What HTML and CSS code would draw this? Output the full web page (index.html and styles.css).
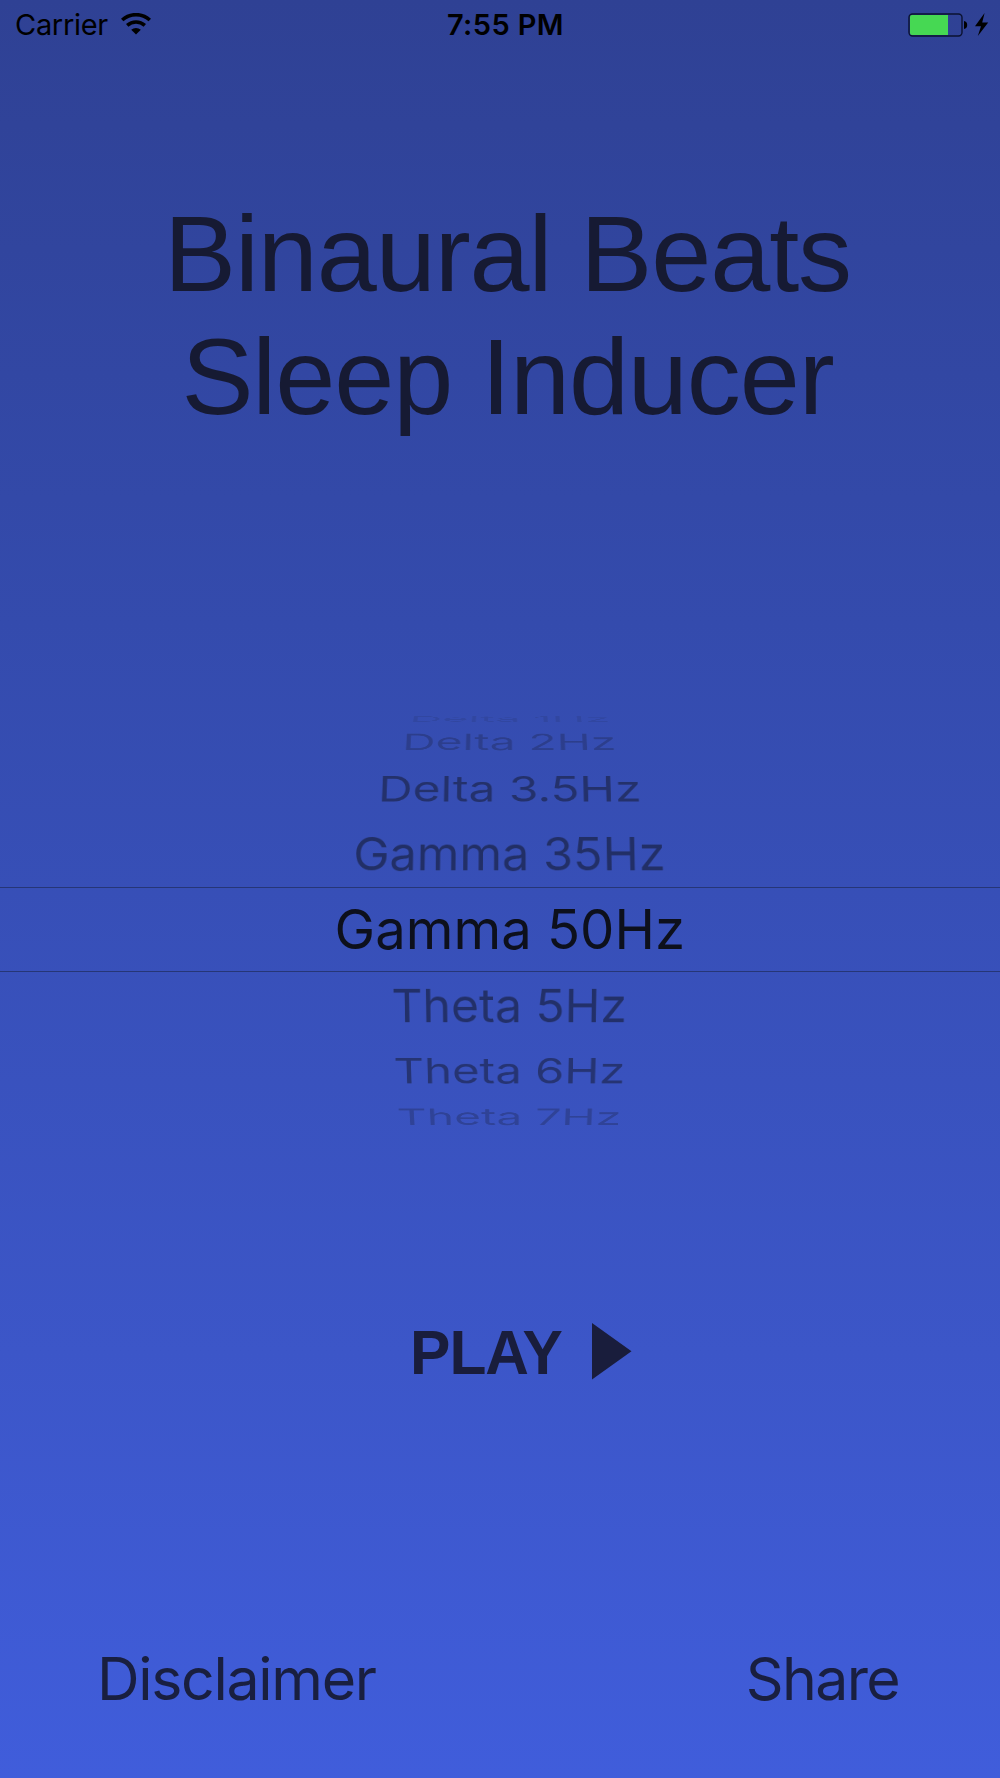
FILE: index.html
```
<!DOCTYPE html>
<html lang="en">
<head>
    <meta charset="UTF-8">
    <meta name="viewport" content="width=device-width, initial-scale=1.0">
    <title>Binaural Beats Sleep Inducer</title>
    <link rel="stylesheet" href="styles.css">
</head>
<body>
<div class="status-bar">
    <div class="status-left">
        <span class="carrier">Carrier</span>
        <svg class="wifi" width="30" height="22" viewBox="0 0 30 22">
            <path d="M1.2 7 A20.5 20.5 0 0 1 28.8 7" fill="none" stroke="#000" stroke-width="3.6"/>
            <path d="M6.2 12.4 A13.2 13.2 0 0 1 23.8 12.4" fill="none" stroke="#000" stroke-width="3.6"/>
            <path d="M10.2 16.8 A7.5 7.5 0 0 1 19.8 16.8 L15 21.6 Z"/>
        </svg>
    </div>
    <div class="time">7:55 PM</div>
    <div class="status-right">
        <svg width="82" height="26" viewBox="0 0 82 26">
            <rect x="1" y="2" width="53" height="22" rx="3.5" fill="none" stroke="#0b1230" stroke-width="1.4"/>
            <path d="M4 3 H40 V23 H4 Q2 23 2 21 V5 Q2 3 4 3 Z" fill="#46d853"/>
            <path d="M56 9 Q59.2 9.6 59.2 13 Q59.2 16.4 56 17 Z"/>
            <path d="M76.6 1 L67 14.2 H73 L69.8 24 L80.2 10.4 H74.2 Z"/>
        </svg>
    </div>
</div>

<h1 class="title">Binaural Beats<br>Sleep Inducer</h1>

<div class="picker">
    <div class="row delta1"><span>Delta 1Hz</span></div>
    <div class="row delta2"><span>Delta 2Hz</span></div>
    <div class="row delta3"><span>Delta 3.5Hz</span></div>
    <div class="row gamma35"><span>Gamma 35Hz</span></div>
    <div class="row selected"><span>Gamma 50Hz</span></div>
    <div class="row theta5"><span>Theta 5Hz</span></div>
    <div class="row theta6"><span>Theta 6Hz</span></div>
    <div class="row theta7"><span>Theta 7Hz</span></div>
</div>

<div class="play">
    <span class="play-label">PLAY</span>
    <svg width="40" height="57" viewBox="0 0 40 57">
        <path d="M0 0 L39.5 28.2 L0 56.5 Z" fill="#191d3c"/>
    </svg>
</div>

<div class="footer">
    <span class="disclaimer">Disclaimer</span>
    <span class="share">Share</span>
</div>
</body>
</html>
```
FILE: styles.css
```
* {
    box-sizing: border-box;
}

body {
    margin: 0;
    width: 1000px;
    height: 1778px;
    overflow: hidden;
    display: flex;
    flex-direction: column;
    background: linear-gradient(#2f4194, #344bad 35%, #3c56c8 76%, #405ddb);
    font-family: Inter, "Liberation Sans", sans-serif;
}

.status-bar {
    display: grid;
    grid-template-columns: 1fr auto 1fr;
    align-items: center;
    height: 50px;
    padding: 0 10px 0 15px;
    font-size: 29px;
    line-height: 50px;
    color: #000;
}

.status-left {
    display: flex;
    align-items: center;
    gap: 13px;
}

.carrier {
    letter-spacing: -0.3px;
}

.wifi {
    margin-bottom: 3px;
}

.time {
    margin-left: 6px;
    font-weight: 600;
    letter-spacing: 0.4px;
}

.status-right {
    display: flex;
    justify-content: flex-end;
}

.title {
    margin: 142px 0 0;
    padding-left: 15px;
    text-align: center;
    font: 400 108px/123px "Liberation Sans", sans-serif;
    letter-spacing: -1.1px;
    color: #161a33;
}

/* wheel picker */
.picker {
    margin-top: 271px;
}

.row {
    display: flex;
    justify-content: center;
    align-items: center;
    padding-left: 19px;
    font-size: 54px;
    line-height: 66px;
    color: #0d101c;
}

.row span {
    flex: none;
}

.delta1 {
    height: 19px;
}

.delta1 span {
    opacity: 0.11;
    transform: perspective(3500px) rotateX(82deg) scaleX(0.837);
}

.delta2 {
    height: 28px;
}

.delta2 span {
    opacity: 0.25;
    transform: perspective(3500px) rotateX(65deg) scaleX(0.853);
}

.delta3 {
    height: 65px;
}

.delta3 span {
    opacity: 0.48;
    transform: perspective(3500px) rotateX(49deg) scaleX(0.884);
}

.gamma35 {
    height: 66px;
}

.gamma35 span {
    opacity: 0.52;
    transform: perspective(3500px) rotateX(31deg) scaleX(0.9);
}

.selected {
    height: 85px;
    border-top: 1px solid #263677;
    border-bottom: 1px solid #263677;
}

.selected span {
    transform: scale(1.008, 1.02);
}

.theta5 {
    height: 68px;
}

.theta5 span {
    opacity: 0.52;
    transform: perspective(3500px) rotateX(-31deg) scaleX(0.89);
}

.theta6 {
    height: 62px;
}

.theta6 span {
    opacity: 0.47;
    transform: perspective(3500px) rotateX(-49deg) scaleX(0.874);
}

.theta7 {
    height: 30px;
}

.theta7 span {
    opacity: 0.25;
    transform: perspective(3500px) rotateX(-65deg) scaleX(0.855);
}

.play {
    display: flex;
    align-items: center;
    height: 60px;
    margin-top: 189px;
    padding-left: 410px;
    font: 700 63px/60px "Liberation Sans", sans-serif;
    color: #191d3c;
}

.play-label {
    width: 182px;
    padding-top: 2px;
    letter-spacing: -1px;
    transform: scaleX(0.96);
    transform-origin: left;
}

.footer {
    display: flex;
    justify-content: space-between;
    margin-top: auto;
    padding: 0 101px 63px 97px;
    font-size: 59px;
    line-height: 72px;
    color: #191f40;
}

.disclaimer {
    letter-spacing: -1.3px;
}

.share {
    letter-spacing: -1.65px;
}
```
